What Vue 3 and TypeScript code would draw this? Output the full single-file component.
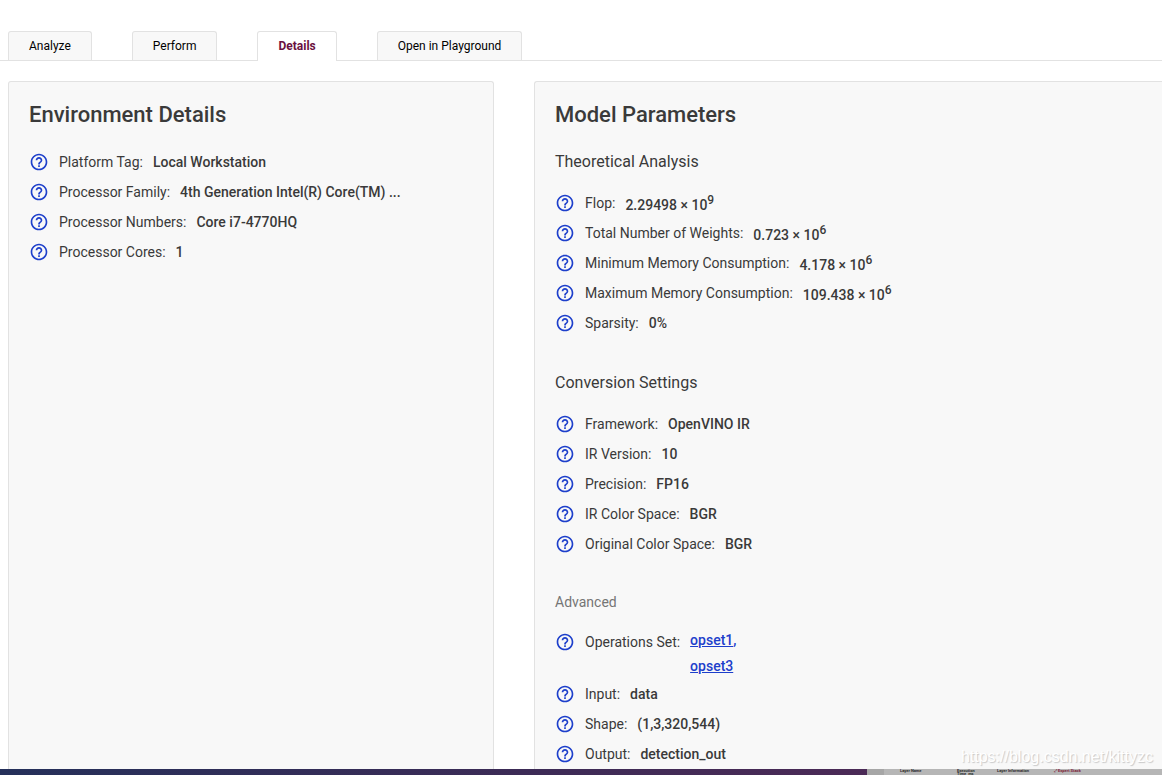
<script setup lang="ts">
import { ref } from 'vue'

interface Parameter {
  label: string
  value?: string
  power?: number
  links?: string[]
}

interface Section {
  title: string
  muted?: boolean
  items: Parameter[]
}

interface Panel {
  title: string
  sections: Section[]
}

const tabs: string[] = ['Analyze', 'Perform', 'Details', 'Open in Playground']
const activeTab = ref('Details')

const panels: Panel[] = [
  {
    title: 'Environment Details',
    sections: [
      {
        title: '',
        items: [
          { label: 'Platform Tag:', value: 'Local Workstation' },
          { label: 'Processor Family:', value: '4th Generation Intel(R) Core(TM) ...' },
          { label: 'Processor Numbers:', value: 'Core i7-4770HQ' },
          { label: 'Processor Cores:', value: '1' },
        ],
      },
    ],
  },
  {
    title: 'Model Parameters',
    sections: [
      {
        title: 'Theoretical Analysis',
        items: [
          { label: 'Flop:', value: '2.29498 × 10', power: 9 },
          { label: 'Total Number of Weights:', value: '0.723 × 10', power: 6 },
          { label: 'Minimum Memory Consumption:', value: '4.178 × 10', power: 6 },
          { label: 'Maximum Memory Consumption:', value: '109.438 × 10', power: 6 },
          { label: 'Sparsity:', value: '0%' },
        ],
      },
      {
        title: 'Conversion Settings',
        items: [
          { label: 'Framework:', value: 'OpenVINO IR' },
          { label: 'IR Version:', value: '10' },
          { label: 'Precision:', value: 'FP16' },
          { label: 'IR Color Space:', value: 'BGR' },
          { label: 'Original Color Space:', value: 'BGR' },
        ],
      },
      {
        title: 'Advanced',
        muted: true,
        items: [
          { label: 'Operations Set:', links: ['opset1', 'opset3'] },
          { label: 'Input:', value: 'data' },
          { label: 'Shape:', value: '(1,3,320,544)' },
          { label: 'Output:', value: 'detection_out' },
        ],
      },
    ],
  },
]
</script>

<template>
  <div class="page">
    <nav class="tabs" role="tablist">
      <button
        v-for="tab in tabs"
        :key="tab"
        type="button"
        role="tab"
        class="tab"
        :class="{ active: tab === activeTab }"
        :aria-selected="tab === activeTab"
        @click="activeTab = tab"
      >
        {{ tab }}
      </button>
    </nav>

    <main class="panels">
      <section v-for="panel in panels" :key="panel.title" class="panel">
        <h2 class="panel-title">{{ panel.title }}</h2>
        <div v-for="section in panel.sections" :key="section.title" class="section">
          <h3 v-if="section.title" class="section-title" :class="{ muted: section.muted }">
            {{ section.title }}
          </h3>
          <dl class="list">
            <div v-for="item in section.items" :key="item.label" class="row">
              <dt class="label">
                <button type="button" class="help" :aria-label="'Help: ' + item.label">
                  <svg viewBox="0 0 24 24" aria-hidden="true">
                    <path
                      d="M11 18h2v-2h-2v2zm1-16C6.48 2 2 6.48 2 12s4.48 10 10 10 10-4.48 10-10S17.520 2 12 2zm0 18c-4.410 0-8-3.590-8-8s3.590-8 8-8 8 3.590 8 8-3.590 8-8 8zm0-14c-2.210 0-4 1.790-4 4h2c0-1.100.9-2 2-2s2 .9 2 2c0 2-3 1.750-3 5h2c0-2.250 3-2.500 3-5 0-2.210-1.790-4-4-4z"
                    />
                  </svg>
                </button>
                {{ item.label }}
              </dt>
              <dd v-if="item.links" class="value links">
                <span v-for="(link, index) in item.links" :key="link" class="link-line"
                  ><a href="#">{{ link }}</a
                  ><template v-if="index < item.links.length - 1">,</template></span
                >
              </dd>
              <dd v-else class="value">
                {{ item.value }}<sup v-if="item.power">{{ item.power }}</sup>
              </dd>
            </div>
          </dl>
        </div>
      </section>
    </main>

    <footer class="strip">
      <div class="strip-banner"></div>
      <div class="strip-table">
        <span class="col name">Layer Name</span>
        <span class="col time">Execution Time, ms</span>
        <span class="col info">Layer Information</span>
        <span class="col stack">⤢ Expert Stack</span>
      </div>
    </footer>
    <span class="watermark">https://blog.csdn.net/kittyzc</span>
  </div>
</template>

<style>
body {
  margin: 0;
  background: #fff;
}
</style>

<style scoped>
.page {
  position: relative;
  box-sizing: border-box;
  display: flex;
  flex-direction: column;
  height: 100vh;
  padding-top: 31px;
  overflow: hidden;
  color: #3a3a3a;
  font-family: Roboto, 'Liberation Sans', sans-serif;
  font-size: 14px;
}

.tabs {
  display: flex;
  flex: none;
  gap: 40px;
  padding-left: 8px;
  border-bottom: 1px solid #e2e2e2;
}

.tab {
  box-sizing: border-box;
  height: 29px;
  padding: 0 20px;
  border: 1px solid #e2e2e2;
  border-bottom: 0;
  border-radius: 3px 3px 0 0;
  background: #f8f8f8;
  color: #000;
  font: 400 12px/28px Roboto, 'Liberation Sans', sans-serif;
  cursor: pointer;
}

.tab.active {
  height: 30px;
  margin-bottom: -1px;
  padding-bottom: 1px;
  background: #fff;
  color: #6b1040;
  font-weight: 700;
}

.panels {
  display: grid;
  flex: 1;
  grid-template-columns: minmax(0, 486fr) minmax(0, 628fr);
  gap: 40px;
  min-height: 0;
  padding: 20px 0 0 8px;
  overflow: hidden;
}

.panel {
  padding: 20px 20px 0;
  border: 1px solid #e2e2e2;
  border-radius: 3px 3px 0 0;
  border-bottom: 0;
  background: #f8f8f8;
}

.panel:last-child {
  border-right: 0;
  border-top-right-radius: 0;
}

.panel-title {
  margin: 0 0 20px;
  font-size: 22px;
  font-weight: 500;
  line-height: 25px;
}

.section + .section {
  margin-top: 30px;
}

.section-title {
  margin: 0 0 11px;
  font-size: 16px;
  font-weight: 400;
  line-height: 30px;
}

.section-title.muted {
  margin-bottom: 12px;
  color: #757575;
  font-size: 14px;
  line-height: 26px;
}

.list {
  margin: 0;
}

.row {
  display: flex;
  gap: 10px;
  min-height: 30px;
}

.label {
  display: flex;
  align-items: center;
  gap: 10px;
  height: 30px;
  white-space: nowrap;
}

.help {
  flex: none;
  width: 20px;
  height: 20px;
  padding: 0;
  border: 0;
  background: none;
  cursor: pointer;
}

.help svg {
  display: block;
  width: 20px;
  height: 20px;
  fill: #1d3fcb;
}

.value {
  height: 30px;
  margin: 0;
  font-weight: 500;
  line-height: 30px;
  white-space: nowrap;
}

.value sup {
  font-size: 12px;
  line-height: 24px;
}

.links {
  display: flex;
  flex-direction: column;
  height: auto;
  color: #1d3fcb;
  line-height: 26px;
}

.links a {
  color: inherit;
}

.strip {
  display: grid;
  flex: none;
  grid-template-columns: minmax(0, 867fr) minmax(0, 295fr);
  height: 6px;
  overflow: hidden;
}

.strip-banner {
  background: linear-gradient(90deg, #25305a, #3c2b56 60%, #4b2a56);
}

.strip-table {
  display: flex;
  padding-left: 33px;
  background: linear-gradient(90deg, #a6a6a6 17px, #b6b6b6 17px);
  color: #2b2b2b;
  font-size: 4px;
  font-weight: 700;
  line-height: 3px;
}

.col {
  flex: none;
}

.name {
  width: 57px;
}

.time {
  width: 20px;
  margin-right: 20px;
}

.info {
  width: 57px;
}

.stack {
  color: #7b2037;
}

.watermark {
  position: absolute;
  right: 9px;
  bottom: 8px;
  color: #fff;
  font: 16px/20px 'Liberation Sans', sans-serif;
  text-shadow: 1px 1px 1px #c8c8c8;
}
</style>
